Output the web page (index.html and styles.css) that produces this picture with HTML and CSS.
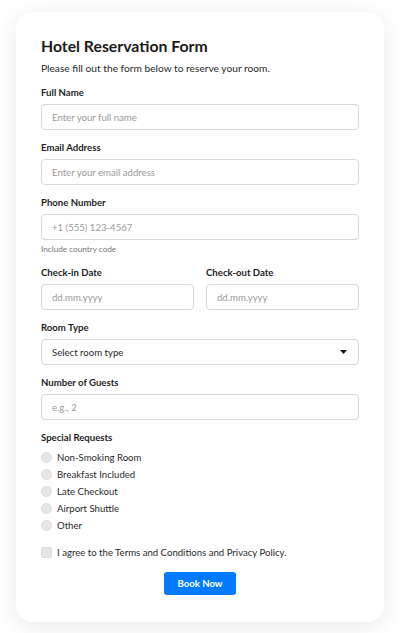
FILE: index.html
```html
<!DOCTYPE html>
<html lang="en">
<head>
<meta charset="utf-8">
<title>Hotel Reservation Form</title>
<link rel="stylesheet" href="styles.css">
</head>
<body>
<form class="card">
  <h1 class="title">Hotel Reservation Form</h1>
  <p class="subtitle">Please fill out the form below to reserve your room.</p>

  <div class="group">
    <label class="label">Full Name</label>
    <input class="field" type="text" placeholder="Enter your full name">
  </div>

  <div class="group">
    <label class="label">Email Address</label>
    <input class="field" type="text" placeholder="Enter your email address">
  </div>

  <div class="group">
    <label class="label">Phone Number</label>
    <input class="field" type="text" placeholder="+1 (555) 123-4567">
    <div class="help">Include country code</div>
  </div>

  <div class="row">
    <div class="group col">
      <label class="label">Check-in Date</label>
      <input class="field" type="text" placeholder="dd.mm.yyyy">
    </div>
    <div class="group col">
      <label class="label">Check-out Date</label>
      <input class="field" type="text" placeholder="dd.mm.yyyy">
    </div>
  </div>

  <div class="group">
    <label class="label">Room Type</label>
    <div class="select-wrap">
      <select class="field select">
        <option>Select room type</option>
      </select>
      <svg class="arrow" width="7" height="4" viewBox="0 0 7 4"><path d="M0 0H7L3.5 4Z" fill="#111"/></svg>
    </div>
  </div>

  <div class="group">
    <label class="label">Number of Guests</label>
    <input class="field" type="text" placeholder="e.g., 2">
  </div>

  <div class="group options">
    <label class="label">Special Requests</label>
    <label class="option"><input type="radio" name="req" class="radio"><span>Non-Smoking Room</span></label>
    <label class="option"><input type="radio" name="req" class="radio"><span>Breakfast Included</span></label>
    <label class="option"><input type="radio" name="req" class="radio"><span>Late Checkout</span></label>
    <label class="option"><input type="radio" name="req" class="radio"><span>Airport Shuttle</span></label>
    <label class="option"><input type="radio" name="req" class="radio"><span>Other</span></label>
  </div>

  <label class="option agree"><input type="checkbox" class="check"><span>I agree to the Terms and Conditions and Privacy Policy.</span></label>

  <div class="actions">
    <button type="button" class="btn">Book Now</button>
  </div>
</form>
</body>
</html>
```

FILE: styles.css
```css
* { box-sizing: border-box; }

html, body {
  margin: 0;
  padding: 0;
  background: #ffffff;
}

body {
  padding: 12px 16px;
  font-family: "Lato", "Noto Sans", sans-serif;
  color: #222;
}

.card {
  background: #fff;
  border-radius: 16px;
  box-shadow: 0 4px 22px rgba(0, 0, 0, 0.09);
  padding: 24px 25px 27px;
  display: flex;
  flex-direction: column;
}

.title {
  margin: 0 0 4px;
  font-size: 15.8px;
  line-height: 20px;
  font-weight: 700;
  color: #1b1b1b;
}

.subtitle {
  margin: 0 0 10px;
  font-size: 10.2px;
  line-height: 16px;
  color: #2a2a2a;
}

.group {
  display: flex;
  flex-direction: column;
  margin-bottom: 11px;
}

.label {
  font-size: 9.6px;
  line-height: 14px;
  font-weight: 700;
  color: #1e1e1e;
  margin-bottom: 4px;
}

.field {
  height: 26px;
  width: 100%;
  border: 1px solid #dadada;
  border-radius: 4px;
  padding: 0 10px;
  font-family: inherit;
  font-size: 9.6px;
  color: #333;
  background: #fff;
  outline: none;
}

.field::placeholder {
  color: #9a9a9a;
}

.help {
  margin-top: 3px;
  font-size: 8.2px;
  line-height: 12px;
  color: #777;
}

.row {
  display: flex;
  gap: 12px;
}

.col {
  flex: 1;
  min-width: 0;
}

.select-wrap {
  position: relative;
}

.select {
  appearance: none;
  -webkit-appearance: none;
  color: #2a2a2a;
}

.arrow {
  position: absolute;
  right: 12px;
  top: 11px;
  pointer-events: none;
}

.options {
  margin-bottom: 10px;
}

.option {
  display: flex;
  align-items: center;
  height: 17px;
  font-size: 9.6px;
  color: #2a2a2a;
}

.radio,
.check {
  appearance: none;
  -webkit-appearance: none;
  margin: 0 5px 0 0;
  width: 11px;
  height: 11px;
  background: #e6e6e6;
  border: 1px solid #dcdcdc;
  flex: none;
}

.radio {
  border-radius: 50%;
}

.check {
  border-radius: 2px;
}

.agree {
  margin-bottom: 11px;
}

.actions {
  display: flex;
  justify-content: center;
}

.btn {
  width: 72px;
  height: 23px;
  border: none;
  border-radius: 3px;
  background: #007bff;
  color: #fff;
  font-family: inherit;
  font-size: 9.6px;
  font-weight: 700;
  padding: 0;
}
```
